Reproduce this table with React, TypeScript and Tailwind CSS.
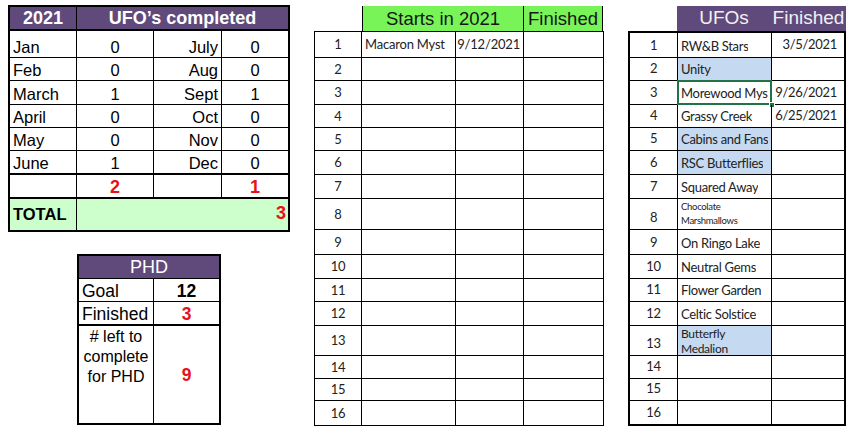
const ARIAL = "font-['Liberation_Sans',Arial,sans-serif]";
const CALIBRI = "font-['Lato','Open_Sans',sans-serif]";

// row heights of the sheet (rows 1..16 under the header line)
const MID_ROWS = [26, 23, 24, 23, 23, 24, 24, 31, 25, 24, 23, 24, 30, 23, 22, 24];
const UFO_ROWS = [25, 23, 24, 23, 23, 24, 24, 31, 25, 24, 23, 24, 30, 23, 22, 23];

const MONTHS = [
  { a: "Jan", av: 0, b: "July", bv: 0, h: 27 },
  { a: "Feb", av: 0, b: "Aug", bv: 0, h: 23 },
  { a: "March", av: 1, b: "Sept", bv: 1, h: 24 },
  { a: "April", av: 0, b: "Oct", bv: 0, h: 23 },
  { a: "May", av: 0, b: "Nov", bv: 0, h: 23 },
  { a: "June", av: 1, b: "Dec", bv: 0, h: 24 },
];

type Ufo = { name?: string; done?: string; blue?: boolean; small?: "xs" | "sm"; selected?: boolean };

const UFOS: Ufo[] = [
  { name: "RW&B Stars", done: "3/5/2021" },
  { name: "Unity", blue: true },
  { name: "Morewood Mys", done: "9/26/2021", selected: true },
  { name: "Grassy Creek", done: "6/25/2021" },
  { name: "Cabins and Fans", blue: true },
  { name: "RSC Butterflies", blue: true },
  { name: "Squared Away" },
  { name: "Chocolate Marshmallows", small: "xs" },
  { name: "On Ringo Lake" },
  { name: "Neutral Gems" },
  { name: "Flower Garden" },
  { name: "Celtic Solstice" },
  { name: "Butterfly Medalion", blue: true, small: "sm" },
  {},
  {},
  {},
];

function YearTable() {
  return (
    <div className={`${ARIAL} w-[282px] border-2 border-black text-[16.5px] text-black`}>
      {/* Header */}
      <div className="flex h-[24px] border-b-2 border-black bg-[#604a7b] text-[18px] font-bold text-white">
        <div className="flex w-[67px] items-center justify-center border-r border-black">2021</div>
        <div className="flex flex-1 items-center justify-center">UFO’s completed</div>
      </div>

      {MONTHS.map((m, i) => (
        <div
          key={m.a}
          style={{ height: m.h }}
          className={`flex ${i === MONTHS.length - 1 ? "border-b-2" : "border-b"} border-black leading-[19px]`}
        >
          <div className="flex w-[67px] items-end border-r border-black pl-[3px]">{m.a}</div>
          <div className="flex w-[77px] items-end justify-center border-r border-black">{m.av}</div>
          <div className="flex w-[68px] items-end justify-end border-r border-black pr-[3px]">{m.b}</div>
          <div className="flex flex-1 items-end justify-center">{m.bv}</div>
        </div>
      ))}

      {/* Half-year sums */}
      <div className="flex h-[24px] border-b-2 border-black text-[18px] leading-[20px] font-bold text-[#e8101a]">
        <div className="w-[67px] border-r border-black" />
        <div className="flex w-[77px] items-end justify-center border-r border-black">2</div>
        <div className="w-[68px] border-r border-black" />
        <div className="flex flex-1 items-end justify-center">1</div>
      </div>

      {/* Total */}
      <div className="flex h-[31px] bg-[#ccffcc]">
        <div className="flex w-[67px] items-end border-r border-black pb-[3px] pl-[3px] font-bold">TOTAL</div>
        <div className="flex flex-1 items-end justify-end pb-[3px] pr-[2px] text-[18px] font-bold text-[#e8101a]">3</div>
      </div>
    </div>
  );
}

function PhdTable() {
  return (
    <div className={`${ARIAL} ml-[69px] mt-[22px] w-[144px] border-2 border-black text-[17.5px] text-black`}>
      <div className="flex h-[23px] items-center justify-center border-b border-black bg-[#604a7b] text-[18px] text-white">
        PHD
      </div>
      <div className="flex h-[23px] border-b border-black leading-[20px]">
        <div className="flex w-[75px] items-end border-r border-black pl-[3px]">Goal</div>
        <div className="flex flex-1 items-end justify-center font-bold">12</div>
      </div>
      <div className="flex h-[24px] border-b-2 border-black leading-[20px]">
        <div className="flex w-[75px] items-end border-r border-black pl-[3px]">Finished</div>
        <div className="flex flex-1 items-end justify-center font-bold text-[#e8101a]">3</div>
      </div>
      <div className="flex h-[97px]">
        <div className="w-[75px] border-r border-black pt-[1px] text-center text-[16px] leading-[20px]">
          # left to complete for PHD
        </div>
        <div className="flex flex-1 items-center justify-center pt-[2px] font-bold text-[#e8101a]">9</div>
      </div>
    </div>
  );
}

function StartsTable() {
  return (
    <div className="ml-[24px] flex flex-col">
      <div className={`${ARIAL} ml-[48px] flex h-[25px] text-[18.5px] text-[#151515]`}>
        <div className="flex w-[162px] items-center justify-center border-x border-black bg-[#78f458]">
          Starts in 2021
        </div>
        <div className="flex w-[79px] items-center justify-center border-r border-black bg-[#78f458]">
          Finished
        </div>
      </div>
      <div className={`${CALIBRI} w-[290px] border border-black text-[13px] tracking-[-0.2px] text-[#222]`}>
        {MID_ROWS.map((h, i) => (
          <div
            key={i}
            style={{ height: h }}
            className={`flex ${i === MID_ROWS.length - 1 ? "" : "border-b"} border-black`}
          >
            <div className="flex w-[47px] items-center justify-center border-r border-black pt-[1px]">{i + 1}</div>
            <div className="flex w-[94px] items-center border-r border-black pl-[3px] whitespace-nowrap">
              {i === 0 ? "Macaron Myst" : ""}
            </div>
            <div className="flex w-[68px] items-center justify-end border-r border-black pr-[3px]">
              {i === 0 ? "9/12/2021" : ""}
            </div>
            <div className="flex-1" />
          </div>
        ))}
      </div>
    </div>
  );
}

function UfoTable() {
  return (
    <div className="ml-[24px] flex flex-col">
      <div className={`${ARIAL} ml-[49px] flex h-[25px] bg-[#604a7b] text-[19px] text-[#f2f0f5]`}>
        <div className="flex w-[94px] items-center justify-center">UFOs</div>
        <div className="flex w-[75px] items-center justify-center">Finished</div>
      </div>
      <div className={`${CALIBRI} w-[218px] border-2 border-black text-[13px] tracking-[-0.3px] text-[#222]`}>
        {UFOS.map((u, i) => (
          <div
            key={i}
            style={{ height: UFO_ROWS[i] }}
            className={`flex ${i === UFOS.length - 1 ? "" : "border-b"} border-black`}
          >
            <div className="flex w-[48px] items-end justify-center border-r border-black pb-[2px]">{i + 1}</div>
            <div
              className={`relative flex w-[94px] border-r border-black pl-[3px] ${
                u.blue ? "bg-[#c5d9f1]" : ""
              } ${u.small ? "flex-col justify-start" : "items-end pb-[1px]"}`}
            >
              {u.small === "xs" ? (
                <span className="pt-[1px] text-[9.5px] leading-[14px]">
                  Chocolate
                  <br />
                  Marshmallows
                </span>
              ) : u.small === "sm" ? (
                <span className="text-[12px] leading-[15px]">
                  Butterfly
                  <br />
                  Medalion
                </span>
              ) : (
                <span className="overflow-hidden whitespace-nowrap">{u.name}</span>
              )}
              {u.selected && (
                <>
                  <div className="pointer-events-none absolute -bottom-[1px] -left-[1px] -right-[1px] -top-[1px] border-2 border-[#217346]" />
                  <div className="absolute -bottom-[4px] -right-[4px] h-[6px] w-[6px] border border-white bg-[#217346]" />
                </>
              )}
            </div>
            <div className="flex flex-1 items-center justify-end pr-[7px]">{u.done ?? ""}</div>
          </div>
        ))}
      </div>
    </div>
  );
}

export default function App() {
  return (
    <div className="flex h-[433px] w-[856px] overflow-hidden bg-white pl-[8px] pt-[5px]">
      <div className="flex flex-col">
        <YearTable />
        <PhdTable />
      </div>
      <div className="pt-[1px]">
        <StartsTable />
      </div>
      <div className="pt-[1px]">
        <UfoTable />
      </div>
    </div>
  );
}
